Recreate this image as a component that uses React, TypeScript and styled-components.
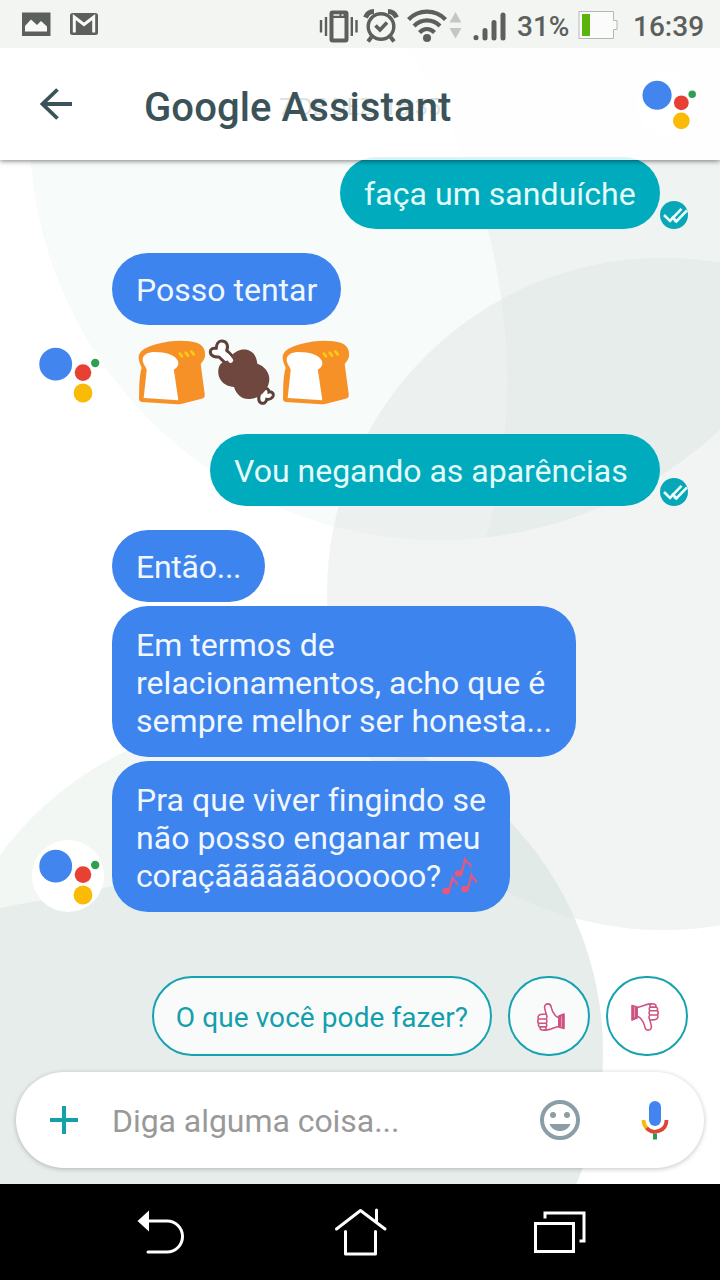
import React from "react";
import styled, { createGlobalStyle } from "styled-components";

const TEAL = "#00abbd";
const BLUE = "#3d84ee";
const STATUS = "#5c605d";

const GlobalStyle = createGlobalStyle`
  * { box-sizing: border-box; }
  body { margin: 0; background: #fff; font-family: Roboto, "Liberation Sans", sans-serif; }
`;

const Screen = styled.main`
  position: relative;
  width: 720px;
  height: 1280px;
  display: flex;
  flex-direction: column;
  overflow: hidden;
  isolation: isolate;
  background: #fff;
`;

const Wallpaper = styled.svg`
  position: absolute;
  inset: 0;
  z-index: -1;
`;

const StatusBar = styled.div`
  position: relative;
  z-index: 3;
  height: 48px;
  flex: none;
  display: flex;
  align-items: center;
  padding: 0 16px 0 20px;
  background: #f3f5f3;
  color: ${STATUS};
  svg { display: block; flex: none; }
`;

const StatusGroup = styled.div<{ $end?: boolean }>`
  display: flex;
  align-items: center;
  height: 48px;
  margin-left: ${(p) => (p.$end ? "auto" : "0")};
`;

const StatusGlyph = styled.svg<{ $left?: number; $top?: number }>`
  margin-left: ${(p) => p.$left ?? 0}px;
  margin-top: ${(p) => p.$top ?? 0}px;
`;

const StatusText = styled.span<{ $width: number; $left: number }>`
  width: ${(p) => p.$width}px;
  margin-left: ${(p) => p.$left}px;
  font-size: 28px;
  line-height: 48px;
  font-weight: 500;
  padding-top: 5px;
  white-space: nowrap;
`;

const Header = styled.header`
  position: relative;
  z-index: 2;
  height: 112px;
  flex: none;
  display: flex;
  align-items: center;
  padding: 0 20px 0 40px;
  background: rgba(255, 255, 255, 0.86);
  box-shadow: 0 1px 5px rgba(0, 0, 0, 0.5);
`;

const TitleWrap = styled.div`
  position: relative;
  flex: 1;
  margin-left: 72px;
`;

const Title = styled.h1`
  position: relative;
  margin: 0;
  padding-top: 7px;
  font-size: 40px;
  line-height: 48px;
  letter-spacing: 0.1px;
  font-weight: 500;
  color: #3b5358;
  white-space: nowrap;
`;

const GhostStamp = styled.span`
  position: absolute;
  left: 135px;
  top: 17px;
  font-size: 23px;
  line-height: 28px;
  color: #dbe1df;
  white-space: nowrap;
`;

const Chat = styled.section`
  height: 819px;
  margin-top: -3px;
  flex: none;
  display: flex;
  flex-direction: column;
  gap: 24px;
`;

const SentRow = styled.div`
  display: flex;
  justify-content: flex-end;
  align-items: flex-end;
  padding-right: 32px;
  svg { display: block; }
`;

const ReceivedRow = styled.div`
  display: flex;
  align-items: flex-end;
  gap: 8px;
  padding-left: 32px;
`;

const Avatar = styled.div<{ $size: number }>`
  width: ${(p) => p.$size}px;
  height: ${(p) => p.$size}px;
  flex: none;
  border-radius: 50%;
  background: #fff;
  svg { display: block; width: 100%; height: 100%; }
`;

const BubbleStack = styled.div`
  display: flex;
  flex-direction: column;
  align-items: flex-start;
  gap: 4px;
`;

const Bubble = styled.div<{ $width: number; $sent?: boolean; $multi?: boolean; $track?: number }>`
  width: ${(p) => p.$width}px;
  height: ${(p) => (p.$multi ? 151 : 72)}px;
  padding: ${(p) => (p.$multi ? 20 : 18)}px 0 0 24px;
  border-radius: 36px;
  background: ${(p) => (p.$sent ? TEAL : BLUE)};
  color: ${(p) => (p.$sent ? "#e4fbfa" : "#f1f7ff")};
  font-size: 32px;
  line-height: 38px;
  letter-spacing: ${(p) => p.$track ?? 0}px;
  white-space: pre;
  svg { display: inline-block; vertical-align: -8px; }
`;

const TightLine = styled.span`
  letter-spacing: -0.19px;
`;

const EmojiMessage = styled.div`
  height: 81px;
  padding: 8px 0 0 24px;
  display: flex;
  svg { display: block; }
`;

const Suggestions = styled.div`
  height: 80px;
  flex: none;
  display: flex;
  justify-content: flex-end;
  gap: 16px;
  padding-right: 32px;
`;

const Chip = styled.button<{ $width: number; $nudge?: number }>`
  width: ${(p) => p.$width}px;
  height: 80px;
  padding: 3px 0 0 ${(p) => p.$nudge ?? 0}px;
  border: 2px solid #16a2b1;
  border-radius: 40px;
  background: rgba(255, 255, 255, 0.75);
  display: flex;
  align-items: center;
  justify-content: center;
  font: 400 28px/34px Roboto, "Liberation Sans", sans-serif;
  letter-spacing: 0.08px;
  color: #149fac;
  white-space: nowrap;
`;

const ReactionChip = styled(Chip)<{ $shift: number }>`
  padding: 2px 0 0;
  justify-content: flex-start;
  padding-left: ${(p) => p.$shift}px;
  svg { flex: none; }
`;

const Composer = styled.div`
  height: 96px;
  flex: none;
  margin: 16px 16px;
  padding: 0 34px;
  display: flex;
  align-items: center;
  border-radius: 48px;
  background: #fff;
  box-shadow: 0 1px 5px rgba(0, 0, 0, 0.24);
  svg { display: block; flex: none; }
`;

const Placeholder = styled.span`
  flex: 1;
  margin-left: 34px;
  padding-top: 2px;
  font-size: 32px;
  line-height: 38px;
  letter-spacing: -0.05px;
  color: #999;
`;

const IconSlot = styled.span<{ $right: number }>`
  margin-right: ${(p) => p.$right}px;
`;

const NavBar = styled.nav`
  height: 96px;
  flex: none;
  display: flex;
  justify-content: space-between;
  align-items: center;
  padding: 0 132px;
  background: #000;
`;

const Assistant = ({ size = 72 }: { size?: number }) => (
  <Avatar $size={size}>
    <svg viewBox="0 0 72 72">
      <circle cx="23.7" cy="26.2" r="16.4" fill="#4285ee" />
      <circle cx="51" cy="34.6" r="8.3" fill="#e74133" />
      <circle cx="63.2" cy="25" r="4.2" fill="#2fa04f" />
      <circle cx="51" cy="55" r="9.4" fill="#f9bb06" />
    </svg>
  </Avatar>
);

const Delivered = () => (
  <svg width="28" height="28" viewBox="0 0 28 28">
    <circle cx="14" cy="14" r="14" fill="#08a7b8" />
    <path d="M4 14l6 6L21.500 7.800M14 19l2.300 1.500L27 9.300M12 15.500l4.300 4.700" fill="none" stroke="#eafcfc" strokeWidth="2.600" />
  </svg>
);

const Bread = () => (
  <svg width="72" height="72" viewBox="0 0 216 216">
    <path
      d="M8 64C6 42 30 30 62 21c42-11 88-14 122-3 26 9 30 42 14 58-4 4-4 7-3 12l11 82c1 9-1 13-9 15l-62 16c-4 1-8 1-12 1l-106-7c-5-1-8-3-8-8 1-40 0-66 8-95C12 81 9 74 8 64z"
      fill="#f59127"
    />
    <path d="M20 68C20 52 38 45 56 45C90 45 118 54 126 72C130 84 123 92 115 97C112 100 114 104 115 108L127 190L23 183L32 100C33 92 20 82 20 68Z" fill="#fff" />
    <path d="M132 50l6 8M149 47l7 9M166 43l7 9" stroke="#ffc817" strokeWidth="8" strokeLinecap="round" />
  </svg>
);

const Meat = () => (
  <svg width="72" height="72" viewBox="0 0 216 216">
    <path
      d="M50 76L33 60C18 62 7 54 7 45c0-9 8-13 18-11 0-11 5-22 16-22 16 0 21 15 15 28l20 20-18 17z"
      fill="#fff" stroke="#5d4037" strokeWidth="9" strokeLinejoin="round"
    />
    <path
      d="M154 172c-2 8-3 22 5 26 8 3 16-2 17-11 9 1 18-4 20-12 1-7-7-12-13-10 0-8-6-12-12-10-7 2-14 9-17 17z"
      fill="#fff" stroke="#5d4037" strokeWidth="9"
    />
    <path
      d="M70 58C84 38 108 33 126 42C140 49 146 62 148 80C168 87 184 104 184 126C184 154 160 184 126 186C102 188 86 174 78 150C52 148 34 132 31 110C29 90 38 74 54 72C61 71 66 66 70 58Z"
      fill="#6f473f"
    />
    <path d="M56 56l12 14" stroke="#fff" strokeWidth="15" strokeLinecap="round" />
  </svg>
);

const Notes = () => (
  <svg width="36" height="38" viewBox="0 0 36 38">
    <g fill="#e8577c">
      <ellipse cx="17.700" cy="16.500" rx="4" ry="3.200" />
      <ellipse cx="5.200" cy="34" rx="4" ry="3.200" />
      <ellipse cx="24" cy="32" rx="4" ry="3.200" />
    </g>
    <path
      d="M20.500 16.500L24 2.500c2 4.500 6 2.500 6 7.500M8 34l3.500-13c1.500 4 5 3 4.500 7M26.800 32L30.500 18.500c1 4 5 3 4.500 7.500"
      fill="none" stroke="#e8577c" strokeWidth="2.200"
    />
  </svg>
);

const Thumb = ({ down }: { down?: boolean }) => (
  <svg width="28" height="28" viewBox="0 0 28 28">
    <g
      transform={down ? "rotate(180 14 14)" : undefined}
      fill="#fff" stroke="#cf5283" strokeWidth="1.600" strokeLinejoin="round" strokeLinecap="round"
    >
      <path d="M9 11C9 9 7.800 7 7.600 4.500C7.500 2 9 .9 11 .9C13 .9 14 2.500 14.300 4.500C14.800 8 16.500 10.500 18.500 12.700C19.500 13.700 20.600 14.400 22 14.400V23.500C19 23.700 17 25 14 26C11 27 7.500 27.300 5 27C3.500 26.800 2.700 25.500 3.200 24.100C1.600 23.600 1 22.100 1.900 20.600C.6 19.500 .5 17.700 1.500 16.500C.5 14 1.500 12 3.500 11.500C5.500 11 7.500 11 9 11Z" />
      <path d="M1.800 16h6.800c1.500 0 2-3 .4-5M2 20.300h6.800c1.500-.2 1.500-3.600 0-4.200M3.300 23.900h5.300c1.500-.3 1.500-3 .2-3.400M8 27c1.400-.5 1.400-2.500 .4-3" fill="none" />
      <path d="M22 13l5-2v14.500l-5-1.500z" fill="#cf5283" />
      <path d="M24.500 13.800v10" stroke="#eba9c2" strokeWidth=".8" />
    </g>
  </svg>
);

export default function App() {
  return (
    <Screen>
      <GlobalStyle />
      <Wallpaper width="720" height="1280" viewBox="0 0 720 1280">
        <defs>
          <clipPath id="upper"><circle cx="440" cy="130" r="410" /></clipPath>
          <clipPath id="lower"><circle cx="269" cy="1053" r="334" /></clipPath>
        </defs>
        <circle cx="440" cy="130" r="410" fill="#eff3f1" />
        <circle cx="-93" cy="380" r="600" fill="#f7fbf9" clipPath="url(#upper)" />
        <circle cx="269" cy="1053" r="334" fill="#f2f7f4" />
        <path d="M0 908C45 899 80 895 112 886C230 850 330 800 400 757V700H720V1280H0z" fill="#e6edeb" clipPath="url(#lower)" />
        <circle cx="663" cy="594" r="336" fill="#1c4c40" fillOpacity=".055" />
        <circle cx="663" cy="594" r="336" fill="#edf2f0" fillOpacity=".4" />
      </Wallpaper>

      <StatusBar>
        <StatusGroup>
          <StatusGlyph width="32" height="26" viewBox="0 0 32 26">
            <rect x="2" y="1.500" width="28.500" height="23.500" fill={STATUS} />
            <path d="M5 20.500v-5.500l6-6.500 6 5.500 4-4 6 5.500v5z" fill="#f8f9f8" />
          </StatusGlyph>
          <StatusGlyph $left={17} width="30" height="24" viewBox="0 0 30 24">
            <rect x="1" y="1" width="28" height="22" rx="2.500" fill={STATUS} />
            <path d="M5.300 20.500V5L15 12.500 24.700 5v15.500" fill="none" stroke="#f8f9f8" strokeWidth="3" />
          </StatusGlyph>
        </StatusGroup>
        <StatusGroup $end>
          <StatusGlyph $top={3} width="40" height="36" viewBox="0 0 40 36">
            <path d="M2 12v12.500M7 9v19M32.800 9v19M37.500 12v12.500" stroke={STATUS} strokeWidth="2.400" />
            <rect x="12.500" y="4.500" width="15" height="28" rx="1" fill="none" stroke={STATUS} strokeWidth="4" />
            <path d="M12 7h16" stroke={STATUS} strokeWidth="6" />
            <path d="M14.500 7h6M22.500 7h2" stroke="#f3f5f3" strokeWidth="1.600" />
          </StatusGlyph>
          <StatusGlyph $left={4} $top={2} width="36" height="36" viewBox="0 0 36 36">
            <circle cx="18" cy="19.500" r="12.800" fill="none" stroke={STATUS} strokeWidth="3.400" />
            <path d="M12.500 18.500l4.500 4.500 7-7.500" fill="none" stroke={STATUS} strokeWidth="3.600" />
            <path d="M2.500 10.500C4 6.500 7 4.500 11 4.500M33.500 10.500C32 6.500 29 4.500 25 4.500" fill="none" stroke={STATUS} strokeWidth="5" />
            <path d="M8.500 30L5 34.500M27.500 30L31 34.500" fill="none" stroke={STATUS} strokeWidth="4" />
          </StatusGlyph>
          <StatusGlyph $left={8} $top={1} width="56" height="36" viewBox="0 0 56 36">
            <g fill="none" stroke={STATUS} strokeWidth="4.200">
              <path d="M1.500 12.500c10-10.500 27-10.500 37 0" />
              <path d="M7 19c7.500-7.500 18.500-7.500 26 0" />
              <path d="M12.500 25.500c4.500-4.500 10.500-4.500 15 0" />
            </g>
            <circle cx="20" cy="31" r="4" fill={STATUS} />
            <path d="M42.500 15.500l6-10.500 6 10.500zM42.500 21h12l-6 10.500z" fill="#c3c6c4" />
          </StatusGlyph>
          <StatusGlyph $left={9} $top={5} width="36" height="32" viewBox="0 0 36 32">
            <path d="M4 26.500v.2M13 19.500v7.500M22 11.500v15.500M31 4v23" stroke={STATUS} strokeWidth="5" strokeLinecap="round" />
          </StatusGlyph>
          <StatusText $width={54} $left={9}>31%</StatusText>
          <StatusGlyph $left={7} $top={2} width="42" height="30" viewBox="0 0 42 30">
            <path d="M1 1.500h34.500v9H39v9h-3.500v9H1z" fill="#fafbfa" stroke="#b4b7b5" strokeWidth="1" />
            <rect x="4" y="4" width="8" height="22" fill="#5ab40b" />
          </StatusGlyph>
          <StatusText $width={71} $left={13}>16:39</StatusText>
        </StatusGroup>
      </StatusBar>

      <Header>
        <svg width="32" height="32" viewBox="0 0 32 32">
          <path d="M32 16H3M17.500 1.500L2.500 16l15 14.500" fill="none" stroke="#3b5358" strokeWidth="3.800" />
        </svg>
        <TitleWrap>
          <GhostStamp>7 DE DEZ, 16:35</GhostStamp>
          <Title>Google Assistant</Title>
        </TitleWrap>
        <Assistant size={64} />
      </Header>

      <Chat>
        <SentRow>
          <Bubble $sent $width={320} $track={0.06}>faça um sanduíche</Bubble>
          <Delivered />
        </SentRow>
        <ReceivedRow>
          <Assistant />
          <BubbleStack>
            <Bubble $width={229}>Posso tentar</Bubble>
            <EmojiMessage>
              <Bread />
              <Meat />
              <Bread />
            </EmojiMessage>
          </BubbleStack>
        </ReceivedRow>
        <SentRow>
          <Bubble $sent $width={450}>Vou negando as aparências</Bubble>
          <Delivered />
        </SentRow>
        <ReceivedRow>
          <Assistant />
          <BubbleStack>
            <Bubble $width={153} $track={-0.25}>Então...</Bubble>
            <Bubble $width={464} $multi $track={0.04}>{"Em termos de\nrelacionamentos, acho que é\nsempre melhor ser honesta..."}</Bubble>
            <Bubble $width={398} $multi $track={0.06}>
              {"Pra que viver fingindo se\nnão posso enganar meu\n"}
              <TightLine>coraçããããããoooooo?</TightLine>
              <Notes />
            </Bubble>
          </BubbleStack>
        </ReceivedRow>
      </Chat>

      <Suggestions>
        <Chip $width={340}>O que você pode fazer?</Chip>
        <ReactionChip $width={82} $shift={27} aria-label="Gostei"><Thumb /></ReactionChip>
        <ReactionChip $width={82} $shift={22.5} aria-label="Não gostei"><Thumb down /></ReactionChip>
      </Suggestions>

      <Composer>
        <svg width="28" height="28" viewBox="0 0 28 28">
          <path d="M14 0v28M0 14h28" stroke="#149fac" strokeWidth="4" />
        </svg>
        <Placeholder>Diga alguma coisa...</Placeholder>
        <IconSlot $right={60}>
          <svg width="40" height="40" viewBox="0 0 40 40">
            <circle cx="20" cy="20" r="18" fill="none" stroke="#8a9ea6" strokeWidth="4" />
            <circle cx="13" cy="15" r="3" fill="#8a9ea6" />
            <circle cx="27" cy="15" r="3" fill="#8a9ea6" />
            <path d="M9.500 24h21c-2 4.800-5.800 7-10.500 7s-8.500-2.200-10.500-7z" fill="#8a9ea6" />
          </svg>
        </IconSlot>
        <svg width="30" height="40" viewBox="0 0 30 40">
          <rect x="9" y="1" width="12" height="25" rx="6" fill="#4285f0" />
          <path d="M3.500 20a11.500 11.500 0 0 0 3.500 8.400" fill="none" stroke="#f9bb06" strokeWidth="3.800" />
          <path d="M6.600 28a11.500 11.500 0 0 0 19.900-8" fill="none" stroke="#e04434" strokeWidth="3.800" />
          <path d="M15 33.500v6" stroke="#2f9a4d" strokeWidth="4" />
        </svg>
      </Composer>

      <NavBar>
        <svg width="56" height="56" viewBox="0 0 56 56">
          <path d="M16 17h19a15.500 15.500 0 0 1 0 31H16" fill="none" stroke="#fff" strokeWidth="3" strokeLinecap="round" />
          <path d="M5.500 17L17 6.500v21z" fill="#fff" />
        </svg>
        <svg width="56" height="56" viewBox="0 0 56 56">
          <path d="M4.500 25L28.500 6.500 53 25M44.500 6v12M13.500 27.500V50h30V27.500" fill="none" stroke="#fff" strokeWidth="3" strokeLinecap="round" strokeLinejoin="round" />
        </svg>
        <svg width="56" height="56" viewBox="0 0 56 56">
          <path d="M3.500 19.500h38v28h-38zM13 14.500V9h39v28h-4.500" fill="none" stroke="#fff" strokeWidth="3" />
        </svg>
      </NavBar>
    </Screen>
  );
}
